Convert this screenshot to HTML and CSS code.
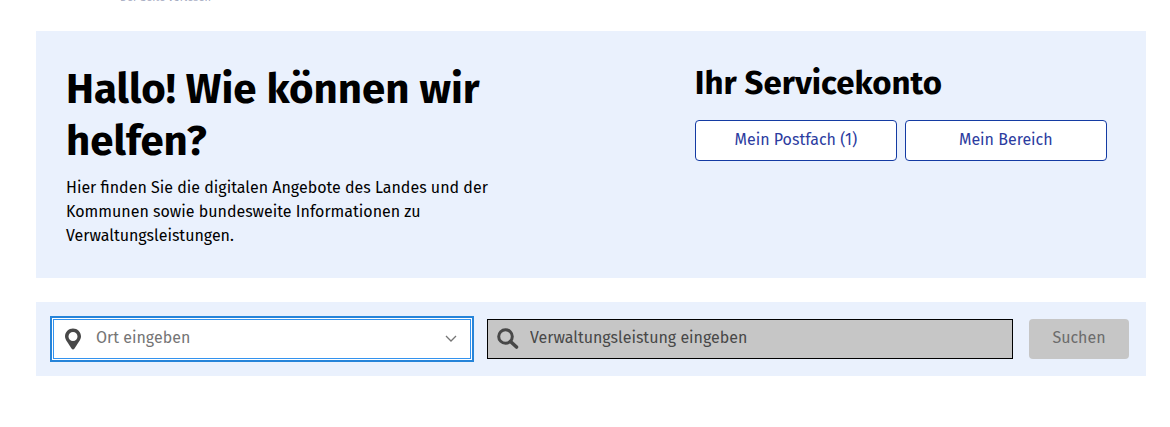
FILE: index.html
```html
<!DOCTYPE html>
<html lang="de">
<head>
<meta charset="utf-8">
<meta name="viewport" content="width=device-width, initial-scale=1">
<title>Serviceportal</title>
<link rel="stylesheet" href="styles.css">
</head>
<body>
<header class="claim"><span>Der Seite vorlesen</span></header>
<main class="page">
  <section class="hero">
    <div class="intro">
      <h1>Hallo! Wie können wir helfen?</h1>
      <p>Hier finden Sie die digitalen Angebote des Landes und der Kommunen sowie bundesweite Informationen zu Verwaltungsleistungen.</p>
    </div>
    <div class="account">
      <h2>Ihr Servicekonto</h2>
      <div class="actions">
        <button class="outline" type="button">Mein Postfach (1)</button>
        <button class="outline" type="button">Mein Bereich</button>
      </div>
    </div>
  </section>
  <form class="search">
    <label class="field place">
      <svg class="pin" viewBox="0 0 16 22" aria-hidden="true"><path fill-rule="evenodd" d="M8 0.500C3.600 0.500 0 4 0 8.300C0 12 3.500 15.500 6.500 20.500Q8 22.500 9.500 20.500C12.500 15.500 16 12 16 8.300C16 4 12.400 0.500 8 0.500zM8 4a4.500 4.500 0 1 1 0 9 4.500 4.500 0 0 1 0-9z"/></svg>
      <input type="text" placeholder="Ort eingeben" aria-label="Ort">
      <svg class="chevron" viewBox="0 0 12 8" aria-hidden="true"><path d="M1 1l5 5 5-5"/></svg>
    </label>
    <label class="field service">
      <svg class="lens" viewBox="0 0 22 22" aria-hidden="true"><circle cx="8.500" cy="8.500" r="6.800"/><path d="M13.500 13.500l6 5.500" stroke-width="3.600"/></svg>
      <input type="text" placeholder="Verwaltungsleistung eingeben" aria-label="Verwaltungsleistung" disabled>
    </label>
    <button class="submit" type="submit" disabled>Suchen</button>
  </form>
</main>
</body>
</html>
```
FILE: styles.css
```css
* { box-sizing: border-box; }
body { margin: 0; background: #fff; color: #000; font: 16px/24px "Fira Sans", "Noto Sans", sans-serif; }
h1, h2, p { margin: 0; }
button, input { font: inherit; }

.claim {
  display: flex;
  flex-direction: column;
  justify-content: flex-end;
  height: 4px;
  padding-left: 120px;
  color: #a3a9bf;
  font-size: 11px;
  line-height: 12px;
}

.page { padding: 27px 24px 24px 36px; }

.hero {
  display: grid;
  grid-template-columns: 3fr 2fr;
  padding: 30px 32px 30px 30px;
  background: #eaf1fd;
}
.intro { max-width: 430px; }
h1 { font-size: 42px; line-height: 52px; padding-top: 2px; }
.intro p { margin-top: 9px; }
h2 { font-size: 33px; line-height: 40px; padding-top: 2px; }
.actions { display: flex; gap: 8px; margin-top: 17px; }
.outline {
  flex: 1;
  max-width: 202px;
  height: 41px;
  padding: 0 8px 2px;
  border: 1px solid #143ba3;
  border-radius: 4px;
  background: #fff;
  color: #2c3ca0;
}

.search {
  display: grid;
  grid-template-columns: minmax(0, 418fr) minmax(0, 526fr) 100px;
  gap: 16px;
  margin-top: 24px;
  padding: 17px;
  background: #eaf1fd;
}
.field {
  display: flex;
  align-items: center;
  height: 40px;
  border: 1px solid #3392ee;
}
.field input {
  flex: 1;
  min-width: 0;
  height: 100%;
  padding: 0 0 3px;
  border: 0;
  outline: 0;
  background: transparent;
}
.place {
  padding: 0 13px 0 11px;
  background: #fff;
  box-shadow: 0 0 0 1px #fff, 0 0 0 3px #2684d9;
}
.place input { margin-left: 15px; }
.place input::placeholder { color: #757575; opacity: 1; }
.service {
  padding: 0 9px;
  border-color: #000;
  background: #c6c6c6;
}
.service input { margin-left: 11px; }
.service input::placeholder { color: #484848; opacity: 1; }
.pin { width: 16px; height: 22px; fill: #484848; }
.chevron { width: 12px; height: 8px; fill: none; stroke: #757575; stroke-width: 1.3; }
.lens { width: 22px; height: 22px; fill: none; stroke: #484848; stroke-width: 3; stroke-linecap: round; }
.submit {
  height: 40px;
  padding: 0 0 2px;
  border: 0;
  border-radius: 4px;
  background: #c6c6c6;
  color: #6c6c6c;
}
```
